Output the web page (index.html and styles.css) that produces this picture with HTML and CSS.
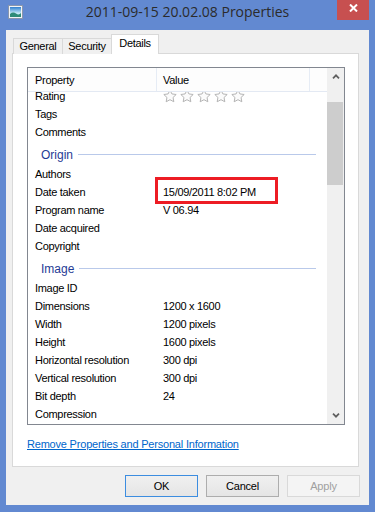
FILE: index.html
```html
<!DOCTYPE html>
<html>
<head>
<meta charset="utf-8">
<link rel="stylesheet" href="styles.css">
</head>
<body>
<div class="window">
  <div class="titlebar">
    <svg class="app-icon" width="15" height="14" viewBox="0 0 15 14">
      <defs>
        <linearGradient id="sky" x1="0" y1="0" x2="0" y2="1">
          <stop offset="0" stop-color="#2f7fd0"/>
          <stop offset="0.6" stop-color="#bfe6f4"/>
          <stop offset="1" stop-color="#e6f6fb"/>
        </linearGradient>
      </defs>
      <rect x="0.5" y="0.5" width="14" height="13" fill="#f2f4f7" stroke="#8996ad"/>
      <rect x="2" y="2" width="11" height="10" fill="url(#sky)"/>
      <path d="M2 9 Q5 6.5 8 8.5 T13 8 V12 H2Z" fill="#2e8c78"/>
    </svg>
    <div class="title">2011-09-15 20.02.08 Properties</div>
    <div class="close">
      <svg width="9" height="8" viewBox="0 0 9 8"><path d="M1 0.5L8 7.5M8 0.5L1 7.5" stroke="#fff" stroke-width="2"/></svg>
    </div>
  </div>
  <div class="client">
    <div class="tabs">
      <div class="tab t-general">General</div>
      <div class="tab t-security">Security</div>
      <div class="tab t-details active">Details</div>
    </div>
    <div class="panel">
      <div class="listbox">
        <div class="list-main">
          <div class="list-header">
            <div class="hcell c1">Property</div>
            <div class="hcell c2">Value</div>
            <div class="hcell c3"></div>
          </div>
          <div class="viewport">
            <div class="rows">
              <div class="row"><span>Rating</span>
                <span class="stars">
                  <svg class="star" viewBox="0 0 14 14"><polygon points="7,1 8.88,4.91 13.18,5.49 10.04,8.49 10.82,12.76 7,10.7 3.18,12.76 3.96,8.49 0.82,5.49 5.12,4.91"/></svg>
                  <svg class="star" viewBox="0 0 14 14"><polygon points="7,1 8.88,4.91 13.18,5.49 10.04,8.49 10.82,12.76 7,10.7 3.18,12.76 3.96,8.49 0.82,5.49 5.12,4.91"/></svg>
                  <svg class="star" viewBox="0 0 14 14"><polygon points="7,1 8.88,4.91 13.18,5.49 10.04,8.49 10.82,12.76 7,10.7 3.18,12.76 3.96,8.49 0.82,5.49 5.12,4.91"/></svg>
                  <svg class="star" viewBox="0 0 14 14"><polygon points="7,1 8.88,4.91 13.18,5.49 10.04,8.49 10.82,12.76 7,10.7 3.18,12.76 3.96,8.49 0.82,5.49 5.12,4.91"/></svg>
                  <svg class="star" viewBox="0 0 14 14"><polygon points="7,1 8.88,4.91 13.18,5.49 10.04,8.49 10.82,12.76 7,10.7 3.18,12.76 3.96,8.49 0.82,5.49 5.12,4.91"/></svg>
                </span>
              </div>
              <div class="row"><span>Tags</span><span></span></div>
              <div class="row"><span>Comments</span><span></span></div>
              <div class="group"><span>Origin</span></div>
              <div class="row"><span>Authors</span><span></span></div>
              <div class="row"><span>Date taken</span><span class="val-marked">15/09/2011 8:02 PM<i class="redbox"></i></span></div>
              <div class="row"><span>Program name</span><span>V 06.94</span></div>
              <div class="row"><span>Date acquired</span><span></span></div>
              <div class="row"><span>Copyright</span><span></span></div>
              <div class="group"><span>Image</span></div>
              <div class="row"><span>Image ID</span><span></span></div>
              <div class="row"><span>Dimensions</span><span>1200 x 1600</span></div>
              <div class="row"><span>Width</span><span>1200 pixels</span></div>
              <div class="row"><span>Height</span><span>1600 pixels</span></div>
              <div class="row"><span>Horizontal resolution</span><span>300 dpi</span></div>
              <div class="row"><span>Vertical resolution</span><span>300 dpi</span></div>
              <div class="row"><span>Bit depth</span><span>24</span></div>
              <div class="row"><span>Compression</span><span></span></div>
            </div>
          </div>
        </div>
        <div class="scrollbar">
          <div class="sb-btn"><svg width="8" height="5" viewBox="0 0 8 5"><path d="M1 4.3L4 1.3L7 4.3" fill="none" stroke="#5f5f5f" stroke-width="1.7"/></svg></div>
          <div class="sb-thumb"></div>
          <div class="sb-track"></div>
          <div class="sb-btn"><svg width="8" height="5" viewBox="0 0 8 5"><path d="M1 0.7L4 3.7L7 0.7" fill="none" stroke="#5f5f5f" stroke-width="1.7"/></svg></div>
        </div>
      </div>
      <div class="link-row"><a class="remove-link" href="#">Remove Properties and Personal Information</a></div>
    </div>
    <div class="buttons">
      <div class="btn btn-default">OK</div>
      <div class="btn">Cancel</div>
      <div class="btn btn-disabled">Apply</div>
    </div>
  </div>
</div>
</body>
</html>
```

FILE: styles.css
```css
html, body {
  margin: 0;
  padding: 0;
}

.window {
  width: 375px;
  height: 512px;
  box-sizing: border-box;
  background: #6289d1;
  padding: 0 6px 7px 6px;
  display: flex;
  flex-direction: column;
  font-family: "Liberation Sans", Arial, sans-serif;
  font-size: 11px;
  color: #000;
}

.titlebar {
  height: 30px;
  flex: none;
  display: grid;
  grid-template-columns: 1fr auto 1fr;
  align-items: start;
}

.app-icon {
  display: block;
  margin: 5px 0 0 2px;
}

.title {
  font-family: "Open Sans", "Noto Sans", sans-serif;
  font-size: 14px;
  line-height: 20px;
  margin-top: 2px;
  color: #2b2b2b;
  white-space: nowrap;
}

.close {
  justify-self: end;
  width: 32px;
  height: 20px;
  box-sizing: border-box;
  background: #c75050;
  display: flex;
  justify-content: center;
  padding-top: 4px;
}

.close svg {
  display: block;
}

.client {
  flex: 1;
  background: #f0f0f0;
  padding: 4px 9px 8px 6px;
  display: flex;
  flex-direction: column;
}

.tabs {
  display: flex;
  align-items: flex-end;
  height: 20px;
  margin: 0 0 -1px 1px;
  position: relative;
  z-index: 1;
}

.tab {
  box-sizing: border-box;
  height: 16px;
  border: 1px solid #d9d9d9;
  border-bottom: none;
  margin-right: -1px;
  text-align: center;
  line-height: 15px;
  letter-spacing: -0.3px;
  background: #f0f0f0;
}

.t-general { width: 50px; }
.t-security { width: 50px; }
.t-details { width: 48px; }

.tab.active {
  height: 20px;
  line-height: 16px;
  background: #fff;
}

.panel {
  width: 347px;
  height: 414px;
  box-sizing: border-box;
  border: 1px solid #d9d9d9;
  background: #fff;
  padding: 13px 0 0 14px;
}

.listbox {
  width: 318px;
  height: 358px;
  box-sizing: border-box;
  border: 1px solid #828790;
  display: flex;
}

.list-main {
  flex: 1;
  min-width: 0;
  display: flex;
  flex-direction: column;
}

.list-header {
  height: 24px;
  box-sizing: border-box;
  border-bottom: 1px solid #e3e9f3;
  background: #fdfdfd;
  display: flex;
  flex: none;
}

.hcell {
  box-sizing: border-box;
  padding: 1px 0 0 7px;
  line-height: 22px;
  letter-spacing: -0.3px;
  border-right: 1px solid #e6ecf5;
}

.hcell.c1 { width: 129px; }
.hcell.c2 { width: 153px; padding-left: 6px; }
.hcell.c3 { flex: 1; border-right: none; }

.viewport {
  flex: 1;
  overflow: hidden;
}

.rows {
  margin-top: -5px;
}

.row {
  display: grid;
  grid-template-columns: 128px 1fr;
  height: 18px;
  line-height: 18px;
  letter-spacing: -0.3px;
}

.row > span {
  padding-left: 7px;
  white-space: nowrap;
}

.stars {
  display: flex;
  align-items: center;
  gap: 3px;
}

.star {
  width: 14px;
  height: 14px;
  display: block;
}

.star polygon {
  fill: #fbfbfb;
  stroke: #b4b4b4;
  stroke-width: 1;
  stroke-linejoin: round;
}

.val-marked {
  position: relative;
}

.redbox {
  position: absolute;
  left: -1px;
  top: -6px;
  width: 123px;
  height: 27px;
  box-sizing: border-box;
  border: 3px solid #ed1c24;
}

.group {
  height: 24px;
  box-sizing: border-box;
  padding: 4px 11px 0 13px;
  display: flex;
  align-items: center;
  gap: 5px;
  font-size: 12px;
  line-height: 14px;
  color: #1f3b95;
}

.group::after {
  content: "";
  flex: 1;
  height: 1px;
  margin-top: -1px;
  background: #b9c9ea;
}

.scrollbar {
  width: 17px;
  flex: none;
  background: #f0f0f0;
  display: flex;
  flex-direction: column;
}

.sb-btn {
  height: 17px;
  display: flex;
  align-items: center;
  justify-content: center;
}

.sb-btn svg {
  display: block;
}

.sb-thumb {
  height: 83px;
  margin: 17px 1px 0 0;
  background: #cdcdcd;
}

.sb-track {
  flex: 1;
}

.link-row {
  margin-top: 12px;
  line-height: 14px;
}

.remove-link {
  color: #0066cc;
  text-decoration: underline;
  letter-spacing: -0.2px;
}

.buttons {
  display: flex;
  justify-content: flex-end;
  gap: 8px;
  margin-top: 8px;
}

.btn {
  width: 73px;
  height: 22px;
  box-sizing: border-box;
  border: 1px solid #adadad;
  background: linear-gradient(#f0f0f0, #e5e5e5);
  display: flex;
  align-items: center;
  justify-content: center;
  letter-spacing: -0.2px;
}

.btn-default {
  border-color: #3c8de0;
}

.btn-disabled {
  border-color: #d9d9d9;
  background: #f4f4f4;
  color: #a0a0a0;
}
```
